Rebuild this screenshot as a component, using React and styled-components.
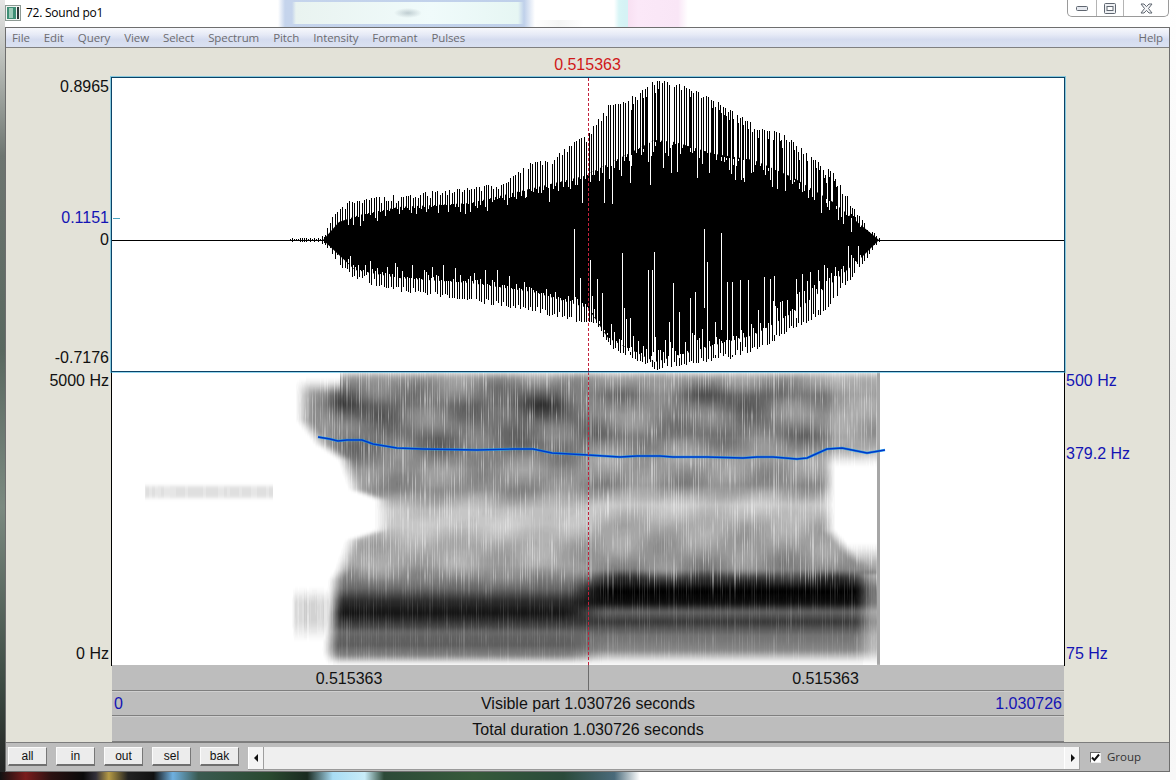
import React, { useMemo } from 'react';
import styled, { createGlobalStyle } from 'styled-components';

const Global = createGlobalStyle`
  html, body { margin: 0; padding: 0; background: #fff; }
  body { font-family: "Liberation Sans", Arial, sans-serif; }
`;

const backdrop = [
  'radial-gradient(ellipse 14px 5px at 408px 13px, rgba(120,140,150,.4), rgba(120,140,150,0)) no-repeat',
  'linear-gradient(90deg,rgba(233,243,240,0),#e9f3f0 4px,#f0fbfb 60%,#e6f6f3 226px,rgba(230,246,243,0)) 292px 2px / 232px 22px no-repeat',
  'linear-gradient(90deg,rgba(197,212,236,0),#c5d4ec 7px,#bfd0ea 246px,rgba(197,212,236,0)) 278px 0 / 257px 27px no-repeat',
  'linear-gradient(90deg,rgba(242,244,242,0),#f4f5f4 50%,rgba(242,244,242,0)) 534px 20px / 50px 7px no-repeat',
  'linear-gradient(90deg,rgba(221,247,248,0),#d8f5f6 5px,#d5f2f5 10px) 614px 0 / 14px 27px no-repeat',
  'linear-gradient(90deg,#f8e0f2,#fbe8f8 10px,#f9e6f6 50px,rgba(249,230,246,0)) 628px 0 / 60px 27px no-repeat',
  'linear-gradient(90deg,#111 0,#7a1c1c 4%,#2b1212 8%,#0a0a0a 13%,#33303a 15%,#b59a45 17%,#222 20%,#111 24%,#6fb0e0 27%,#3a5a50 31%,#2a4a30 42%,#1a2a20 48%,#a8dcf4 52%,#c8ecf8 57%,#2d4a38 60%,#365a3a 74%,#2a4a3a 88%,#4a6a7a 96%,rgba(192,208,216,0) 100%) 0 772px / 640px 8px no-repeat',
  'linear-gradient(180deg,#e6e6e6 0,#b9bdb8 8%,#6d7570 20%,#59685f 45%,#7b8a80 65%,#3c4a42 88%,#222 100%) 0 0 / 5px 780px no-repeat',
  'linear-gradient(180deg,#fff,#f2f2f2 50%,#f8f8f8) 1170px 0 / 6px 780px no-repeat',
  '#ffffff',
].join(',');

const Page = styled.div`
  width: 1176px;
  height: 780px;
  overflow: hidden;
  display: flex;
  flex-direction: column;
  background: ${backdrop};
`;

const TitleRow = styled.div`
  height: 27px;
  display: flex;
  align-items: flex-start;
  padding-left: 5px;
  flex: none;
`;

const AppIcon = styled.svg`
  width: 16px;
  height: 16px;
  margin-top: 5px;
  flex: none;
`;

const TitleText = styled.div`
  margin: 5px 0 0 5px;
  font: 12px/16px "Open Sans", "Noto Sans", sans-serif;
  letter-spacing: -0.25px;
  color: #000;
`;

const Controls = styled.div`
  margin-left: auto;
  margin-right: 7px;
  width: 102px;
  height: 17px;
  box-sizing: border-box;
  display: grid;
  grid-template-columns: 28px 27px 1fr;
  border: 1px solid #9a9a9a;
  border-top: none;
  border-radius: 0 0 5px 5px;
  background: rgba(255, 255, 255, 0.7);
`;

const Control = styled.div`
  display: flex;
  align-items: center;
  justify-content: center;
  border-left: ${(p) => (p.$first ? 'none' : '1px solid #b4b4b4')};
  svg { display: block; }
`;

const Frame = styled.div`
  margin-left: 5px;
  width: 1165px;
  height: 745px;
  box-sizing: border-box;
  border: 1px solid #6e6e6e;
  display: flex;
  flex-direction: column;
  background: #e3e2d8;
  flex: none;
`;

const MenuBar = styled.div`
  height: 20px;
  flex: none;
  box-sizing: border-box;
  border-bottom: 1px solid #808080;
  display: flex;
  align-items: center;
  padding: 0 6px;
  gap: 14px;
  background: linear-gradient(180deg, #f7f8fc 0, #e6eaf6 35%, #d5dcef 60%, #dae1f1 100%);
`;

const MenuItem = styled.span`
  font: 11.5px/16px "Open Sans", "Noto Sans", sans-serif;
  letter-spacing: -0.1px;
  color: #6c6c70;
  margin-left: ${(p) => (p.$end ? 'auto' : '0')};
`;

const Canvas = styled.div`
  display: grid;
  grid-template-columns: 106px 952px 1fr;
  grid-template-rows: 30px 293px 294px 26px 25px 26px;
  flex: none;
`;

const AxisColumn = styled.div`
  display: flex;
  flex-direction: column;
  align-items: ${(p) => (p.$side === 'right' ? 'flex-start' : 'flex-end')};
  padding: ${(p) => (p.$side === 'right' ? '0 0 0 2px' : '0 3px 0 0')};
`;

const AxisLabel = styled.div`
  font-size: 16px;
  line-height: 18px;
  white-space: nowrap;
  color: ${(p) => (p.$blue ? '#1414b4' : '#111')};
  margin-top: ${(p) => p.$top || 0}px;
`;

const CursorTime = styled.div`
  grid-column: 2;
  text-align: center;
  font-size: 16px;
  line-height: 18px;
  padding: 8px 1px 0 0;
  color: #d01818;
`;

const Spacer = styled.div``;

const WavePanel = styled.div`
  position: relative;
  z-index: 1;
  background: #fff;
  box-shadow: 0 0 0 1px #0b4266, 0 0 0 2px rgba(60, 180, 225, 0.55);
  svg { display: block; }
`;

const SpectroPanel = styled.div`
  background: #fff;
  box-shadow: 0 0 0 1px #000;
  margin-top: 1px;
  height: 293px;
  svg { display: block; }
`;

const TimeRow = styled.div`
  grid-column: 2;
  display: grid;
  grid-template-columns: 1fr 1fr;
  background: #bdbdbd;
  box-sizing: border-box;
  border-bottom: 1px solid #7f7f7f;
`;

const TimeCell = styled.div`
  font-size: 16px;
  line-height: 25px;
  text-align: center;
  padding: 1px 2px 0 0;
  color: #111;
  border-left: ${(p) => (p.$split ? '1px solid #6c6c6c' : 'none')};
`;

const InfoRow = styled.div`
  grid-column: 2;
  display: grid;
  grid-template-columns: 1fr auto 1fr;
  align-items: center;
  padding: 1px 2px 0;
  font-size: 16px;
  background: #bdbdbd;
  box-sizing: border-box;
  border-top: 1px solid #cfcfcf;
  border-bottom: 1px solid #7f7f7f;
  color: #111;
`;

const BlueNum = styled.span`
  color: #1414b4;
  text-align: ${(p) => (p.$end ? 'right' : 'left')};
`;

const BottomBar = styled.div`
  flex: 1;
  display: flex;
  align-items: flex-start;
  background: #bdbdbd;
  border-top: 1px solid #7d7d7d;
  padding: 4px 0 0 2px;
  box-sizing: border-box;
`;

const ZoomButton = styled.button`
  width: 39px;
  height: 19px;
  padding: 0;
  margin-right: 9px;
  font: 12px/15px "Liberation Sans", Arial, sans-serif;
  color: #111;
  background: #ececec;
  border: none;
  border-top: 1px solid #fbfbfb;
  border-left: 1px solid #fbfbfb;
  border-right: 1px solid #777;
  border-bottom: 2px solid #6f6f6f;
  box-sizing: border-box;
  flex: none;
`;

const Scrollbar = styled.div`
  width: 832px;
  height: 23px;
  flex: none;
  display: flex;
  justify-content: space-between;
  background: #efefef;
  border-bottom: 1px solid #9a9a9a;
  box-sizing: border-box;
`;

const ScrollArrow = styled.div`
  width: 16px;
  background: #f4f4f4;
  border-left: 1px solid #fff;
  border-right: 1px solid #9e9e9e;
  box-sizing: border-box;
  display: flex;
  align-items: center;
  justify-content: center;
  svg { display: block; }
`;

const GroupToggle = styled.label`
  display: flex;
  align-items: center;
  gap: 6px;
  margin: 3px 0 0 10px;
  font: 11.5px/14px "Open Sans", "Noto Sans", sans-serif;
  color: #333;
`;

const CheckBox = styled.span`
  width: 11px;
  height: 11px;
  box-sizing: border-box;
  background: #fff;
  border-top: 1px solid #666;
  border-left: 1px solid #666;
  border-right: 1px solid #eee;
  border-bottom: 1px solid #eee;
  display: flex;
  align-items: center;
  justify-content: center;
  svg { display: block; }
`;

/* ---------- data helpers ---------- */
const lerp = (pts, v) => {
  if (v <= pts[0][0]) return pts[0][1];
  for (let i = 1; i < pts.length; i++) {
    if (v <= pts[i][0]) {
      const [a, b] = pts[i - 1];
      const [c, d] = pts[i];
      return b + ((d - b) * (v - a)) / (c - a);
    }
  }
  return pts[pts.length - 1][1];
};
const rng = (seed) => () => {
  seed = (seed * 1664525 + 1013904223) >>> 0;
  return seed / 4294967296;
};
const hash = (a, b) => {
  const s = Math.sin(a * 127.1 + b * 311.7) * 43758.5453;
  return s - Math.floor(s);
};
const smooth = (a, b, v) => {
  const t = Math.max(0, Math.min(1, (v - a) / (b - a)));
  return t * t * (3 - 2 * t);
};

const upOuter = [[323,238],[331,218],[343,205],[349,200],[379,197],[410,193],[470,188],[505,182],[529,163],[553,157],[574,142],[588,134],[608,105],[628,100],[655,78],[683,85],[711,98],[734,112],[754,125],[782,133],[810,155],[833,173],[853,205],[869,228],[879,238]];
const upSolid = [[323,240],[339,222],[359,215],[398,207],[470,203],[525,190],[584,176],[616,160],[655,140],[675,142],[715,154],[754,160],[794,178],[833,202],[873,235],[879,240]];
const lowOuter = [[323,242],[339,265],[355,280],[398,292],[450,298],[533,312],[576,322],[596,323],[608,347],[655,370],[707,362],[734,358],[762,348],[786,333],[821,315],[845,288],[861,265],[879,242]];
const lowSolid = [[323,240],[355,270],[398,278],[470,283],[533,292],[588,308],[608,338],[655,362],[715,345],[754,335],[794,312],[833,282],[861,258],[879,240]];
const whiteUp = [[582,203],[604,203],[612,204],[630,183],[650,185],[671,173],[677,172],[697,178],[709,173],[731,167],[734.5,180],[744,182],[772,187],[808,198],[813.6,200],[827,207],[549,202],[525,198],[470,208],[426,212]];
const whiteLow = [[574,229,322],[590,260,330],[704,229,308],[721,233,330],[622,253,345],[653.5,252,362],[647.5,270,360],[651.5,270,360],[673,283,365],[707,262,358],[602,293,335],[580,278,315],[597.4,279,325],[695,292,362],[690,298,362],[727,282,355],[732,282,355],[740,280,342],[747.6,280,342],[764,277,348],[770,279,340],[774,276,335],[796,279,318],[802,274,314],[810,272,314],[817.5,270,310],[827,268,302],[835,267,302],[630,318,352],[624,308,345],[669,322,365],[679,312,358],[715,322,355],[780,302,335],[758,325,345],[395,263,292],[412,265,294],[432,267,296],[443,265,296],[455,268,298],[474,273,300],[485,270,302],[497,270,304],[509,276,306]];

function buildWave() {
  const r = rng(72);
  let spikes = '';
  let notches = '';
  for (let x = 325; x < 879; x += 2.44) {
    const px = Math.round(x) - 112 + 0.5;
    const uo = lerp(upOuter, x) + r() * r() * 9;
    const us = lerp(upSolid, x);
    const lo = lerp(lowOuter, x) - r() * r() * 9;
    const ls = lerp(lowSolid, x);
    spikes += `M${px} ${(Math.min(uo, us) - 78).toFixed(0)}V${(us - 78 + 2).toFixed(0)}`;
    spikes += `M${px} ${(ls - 78 - 2).toFixed(0)}V${(Math.max(lo, ls) - 78).toFixed(0)}`;
    const depthScale = x > 590 ? 30 : 14;
    const up = r() * r() * depthScale;
    const low = r() * r() * depthScale;
    if (x > 345 && x < 860) {
      notches += `M${px + 1} ${(us - 78 - 1).toFixed(0)}V${(us - 78 + up).toFixed(0)}`;
      notches += `M${px + 1} ${(ls - 78 - low).toFixed(0)}V${(ls - 78 + 1).toFixed(0)}`;
    }
    if (x > 590 && r() < 0.3) {
      spikes += `M${px + 1} ${(uo + 8 - 78).toFixed(0)}V${(us - 78 + 2).toFixed(0)}`;
    }
  }
  const solid = [...upSolid.map(([x, y]) => `${x - 112},${y - 78}`), ...[...lowSolid].reverse().map(([x, y]) => `${x - 112},${y - 78}`)].join(' ');
  let noise = '';
  for (let x = 290; x < 325; x += 2) {
    const px = x - 112 + 0.5;
    const a = 1 + r() * (x > 318 ? 4 : 1.4);
    noise += `M${px} ${162 - a}V${162 + a}`;
  }
  let white = '';
  whiteUp.forEach(([x, y]) => { white += `M${Math.round(x) - 112 + 0.5} 0V${y - 78}`; });
  whiteLow.forEach(([x, a, b]) => { white += `M${Math.round(x) - 112 + 0.5} ${a - 78}V${b - 78}`; });
  return { spikes, notches, solid, noise, white };
}

const profL = [[372,.12],[378,.4],[385,.48],[405,.62],[425,.54],[445,.56],[470,.42],[490,.46],[510,.25],[525,.22],[545,.34],[565,.36],[578,.48],[590,.62],[600,.82],[613,.92],[625,.76],[632,.6],[645,.64],[655,.5],[663,.08],[666,0]];
const profR = [[372,.12],[378,.38],[395,.58],[415,.48],[435,.54],[460,.38],[485,.46],[505,.22],[525,.34],[550,.4],[570,.48],[578,.78],[590,1],[603,.95],[612,.62],[622,.78],[635,.56],[650,.48],[661,.08],[666,0]];
const onset = [[372,292],[420,293],[445,312],[460,335],[490,346],[500,372],[530,372],[540,342],[570,332],[580,326],[650,320],[666,323]];
const notchEdge = [[445,833],[530,833],[557,857],[575,880]];

function darkness(x, y) {
  let d = 0;
  if (x >= 292 && x <= 879) {
    const blend = smooth(560, 610, x);
    d = lerp(profL, y) * (1 - blend) + lerp(profR, y) * blend;
    const wob = Math.sin(x / 13 + Math.sin(y / 27)) * Math.sin(y / 9.5 + x / 90);
    const bottomFade = smooth(570, 590, y);
    d *= 1 + wob * 0.16 * (1 - bottomFade);
    if (y < 440) d *= 1 + 0.14 * Math.sin(x / 31) * Math.sin(y / 18 + 1);

    // onset: soft, sloped left edge
    const start = lerp(onset, y);
    d *= smooth(start, start + 20, x);
    if (y < 470) d *= 1 - 0.3 * (1 - smooth(322, 345, x));
    if (x < 340) d *= smooth(376, 396, y);

    // faint streaky fringe in front of the low bands
    if (y > 580 && x < 332) {
      const fringe = 0.17 * smooth(291, 296, x) * smooth(585, 605, y) * (1 - smooth(618, 645, y));
      d = Math.max(d, fringe * (0.6 + 0.6 * hash(Math.round(x / 2.5), 3)));
    }

    // white patch at the right
    const edge = lerp(notchEdge, y);
    const inY = smooth(446, 468, y) * (1 - smooth(540, 578, y));
    d *= 1 - smooth(edge - 14, edge + 4, x) * inY;
    if (y < 470) d *= 1 - 0.25 * smooth(822, 838, x);
    if (y >= 575) d *= 1 - 0.45 * smooth(852, 874, x);

    // vertical streaks from the glottal pulses
    const col = Math.round(x / 2.44);
    if (Math.abs(col * 2.44 - x) < 0.6) {
      const pos = y / 16;
      const k = Math.floor(pos);
      const t = pos - k;
      const n = hash(col, k) * (1 - t) + hash(col, k + 1) * t;
      const strength = 0.46 - 0.3 * smooth(575, 595, y);
      d *= 1 - strength * n * n;
    }
    if (x >= 876.5) d = Math.max(d * 0.5, 0.34);
  }
  if (x >= 145 && x <= 272 && y >= 484 && y <= 500) {
    const e = smooth(484, 488, y) * (1 - smooth(496, 500, y));
    d = Math.max(d, 0.12 * e * (0.8 + 0.3 * hash(Math.round(x / 3), 1)));
  }
  return Math.max(0, Math.min(1, d));
}

function buildSpectro() {
  const LEVELS = 40;
  const paths = Array.from({ length: LEVELS + 1 }, () => []);
  for (let x = 145; x <= 879; x++) {
    if (x > 272 && x < 290) continue;
    let runLevel = -1;
    let runStart = 0;
    const flush = (endY) => {
      if (runLevel > 0) paths[runLevel].push(`M${x - 112} ${runStart - 372}h1V${endY - 372}h-1z`);
    };
    for (let y = 372; y < 666; y += 2) {
      const lv = Math.round(darkness(x, y + 1) * LEVELS);
      if (lv !== runLevel) {
        flush(y);
        runLevel = lv;
        runStart = y;
      }
    }
    flush(666);
  }
  return paths
    .map((parts, lv) => {
      const g = Math.round(255 * (1 - lv / LEVELS));
      return { fill: `rgb(${g},${g},${g})`, d: parts.join('') };
    })
    .filter((p) => p.d);
}

const pitch = [[318,437],[330,439],[338,441],[347,440],[362,440],[373,444],[397,448],[423,449],[477,450],[513,449],[533,449],[552,453],[588,455],[620,457],[637,456],[660,456],[673,457],[707,457],[743,458],[757,457],[773,457],[797,459],[807,458],[827,449],[842,448],[867,453],[885,450]]
  .map(([x, y]) => `${x - 112},${y - 372}`)
  .join(' ');

const MENUS = ['File', 'Edit', 'Query', 'View', 'Select', 'Spectrum', 'Pitch', 'Intensity', 'Formant', 'Pulses'];
const ZOOMS = ['all', 'in', 'out', 'sel', 'bak'];

function Waveform() {
  const w = useMemo(buildWave, []);
  return (
    <svg width="952" height="293" viewBox="0 0 952 293">
      <line x1="0" x2="952" y1="162.5" y2="162.5" stroke="#000" strokeWidth="1" />
      <path d={w.noise} stroke="#000" strokeWidth="1" shapeRendering="crispEdges" />
      <polygon points={w.solid} fill="#000" />
      <path d={w.notches} stroke="#fff" strokeWidth="1" shapeRendering="crispEdges" />
      <path d={w.spikes} stroke="#000" strokeWidth="1" shapeRendering="crispEdges" />
      <path d={w.white} stroke="#fff" strokeWidth="1" shapeRendering="crispEdges" />
      <line x1="1" x2="8" y1="140.5" y2="140.5" stroke="#4aa3c0" strokeWidth="1" />
      <line x1="476.5" x2="476.5" y1="0" y2="293" stroke="#c4203c" strokeWidth="1" strokeDasharray="3 2" />
    </svg>
  );
}

function Spectrogram() {
  const layers = useMemo(buildSpectro, []);
  return (
    <svg width="952" height="293" viewBox="0 0 952 293">
      <defs>
        <filter id="spectroSoft" x="0" y="0" width="100%" height="100%" colorInterpolationFilters="sRGB">
          <feGaussianBlur stdDeviation="0.6 1.6" />
        </filter>
      </defs>
      <g shapeRendering="crispEdges" filter="url(#spectroSoft)">
        {layers.map((l) => (
          <path key={l.fill} d={l.d} fill={l.fill} />
        ))}
      </g>
      <polyline points={pitch} fill="none" stroke="#14a0f0" strokeWidth="2.6" strokeLinejoin="round" opacity="0.8" />
      <polyline points={pitch} fill="none" stroke="#0038c8" strokeWidth="1.4" strokeLinejoin="round" />
      <line x1="476.5" x2="476.5" y1="0" y2="293" stroke="#c4203c" strokeWidth="1" strokeDasharray="3 2" />
    </svg>
  );
}

export default function App() {
  return (
    <Page>
      <Global />
      <TitleRow>
        <AppIcon viewBox="0 0 16 16">
          <rect x="0.5" y="0.5" width="15" height="15" fill="#f2f4f2" stroke="#8d9a94" />
          <rect x="2" y="2" width="9" height="12" fill="#3f8f76" />
          <rect x="4" y="3" width="4" height="10" fill="#9ccab8" />
          <rect x="12" y="2" width="2" height="12" fill="#2e3a3a" />
        </AppIcon>
        <TitleText>72. Sound po1</TitleText>
        <Controls>
          <Control $first>
            <svg width="12" height="7" viewBox="0 0 12 7">
              <rect x="0.5" y="1.5" width="11" height="4" rx="1" fill="#e6e9ef" stroke="#5f6670" />
            </svg>
          </Control>
          <Control>
            <svg width="12" height="11" viewBox="0 0 12 11">
              <rect x="0.5" y="0.5" width="11" height="10" rx="1" fill="#eef0f3" stroke="#5f6670" />
              <rect x="3" y="3.5" width="6" height="4" fill="#fff" stroke="#5f6670" />
            </svg>
          </Control>
          <Control>
            <svg width="13" height="11" viewBox="0 0 13 11">
              <path d="M1 1h3l2.5 2.6L9 1h3L8.5 5.5 12 10H9L6.5 7.4 4 10H1l3.5-4.5z" fill="#f4f5f7" stroke="#5f6670" strokeWidth="1" />
            </svg>
          </Control>
        </Controls>
      </TitleRow>
      <Frame>
        <MenuBar>
          {MENUS.map((m) => (
            <MenuItem key={m}>{m}</MenuItem>
          ))}
          <MenuItem $end>Help</MenuItem>
        </MenuBar>
        <Canvas>
          <Spacer />
          <CursorTime>0.515363</CursorTime>
          <Spacer />
          <AxisColumn>
            <AxisLabel>0.8965</AxisLabel>
            <AxisLabel $blue $top={113}>0.1151</AxisLabel>
            <AxisLabel $top={4}>0</AxisLabel>
            <AxisLabel $top={100}>-0.7176</AxisLabel>
          </AxisColumn>
          <WavePanel>
            <Waveform />
          </WavePanel>
          <Spacer />
          <AxisColumn>
            <AxisLabel $top={1}>5000 Hz</AxisLabel>
            <AxisLabel $top={255}>0 Hz</AxisLabel>
          </AxisColumn>
          <SpectroPanel>
            <Spectrogram />
          </SpectroPanel>
          <AxisColumn $side="right">
            <AxisLabel $blue $top={1}>500 Hz</AxisLabel>
            <AxisLabel $blue $top={55}>379.2 Hz</AxisLabel>
            <AxisLabel $blue $top={182}>75 Hz</AxisLabel>
          </AxisColumn>
          <TimeRow>
            <TimeCell>0.515363</TimeCell>
            <TimeCell $split>0.515363</TimeCell>
          </TimeRow>
          <InfoRow>
            <BlueNum>0</BlueNum>
            <span>Visible part 1.030726 seconds</span>
            <BlueNum $end>1.030726</BlueNum>
          </InfoRow>
          <InfoRow>
            <span />
            <span>Total duration 1.030726 seconds</span>
            <span />
          </InfoRow>
        </Canvas>
        <BottomBar>
          {ZOOMS.map((z) => (
            <ZoomButton key={z}>{z}</ZoomButton>
          ))}
          <Scrollbar>
            <ScrollArrow>
              <svg width="5" height="8" viewBox="0 0 5 8"><path d="M4 0v8L0 4z" fill="#111" /></svg>
            </ScrollArrow>
            <ScrollArrow>
              <svg width="5" height="8" viewBox="0 0 5 8"><path d="M1 0v8l4-4z" fill="#111" /></svg>
            </ScrollArrow>
          </Scrollbar>
          <GroupToggle>
            <CheckBox>
              <svg width="9" height="9" viewBox="0 0 9 9"><path d="M1 4.5l2.4 2.6L8 1.5" fill="none" stroke="#111" strokeWidth="2" /></svg>
            </CheckBox>
            Group
          </GroupToggle>
        </BottomBar>
      </Frame>
    </Page>
  );
}
